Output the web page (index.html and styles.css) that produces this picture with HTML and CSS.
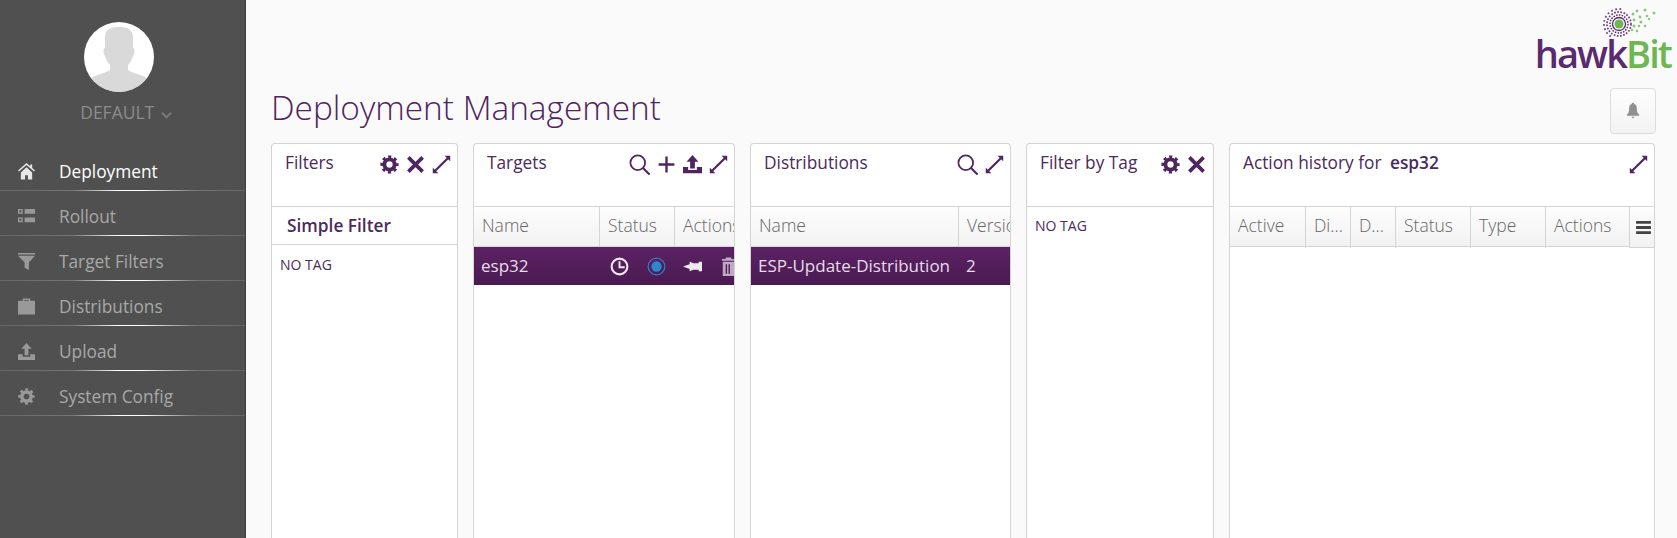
FILE: index.html
```html
<!DOCTYPE html>
<html lang="en">
<head>
  <meta charset="UTF-8" />
  <title>hawkBit - Deployment Management</title>
  <link rel="stylesheet" href="styles.css">
</head>
<body>
  <svg class="defs" width="0" height="0">
    <defs>
      <symbol id="i-gear" viewBox="0 0 24 24">
        <circle cx="12" cy="12" r="6.5" fill="none" stroke="currentColor" stroke-width="5"/>
        <circle cx="12" cy="12" r="9.8" fill="none" stroke="currentColor" stroke-width="3.4" stroke-dasharray="3.9 3.8" stroke-dashoffset="2"/>
      </symbol>
      <symbol id="i-close" viewBox="0 0 24 24">
        <path d="M3 3l18 18M21 3L3 21" fill="none" stroke="currentColor" stroke-width="4.6"/>
      </symbol>
      <symbol id="i-expand" viewBox="0 0 24 24">
        <path d="M4 20L20 4" fill="none" stroke="currentColor" stroke-width="2.8"/>
        <path d="M16 1h7v7zM1 16v7h7z" fill="currentColor"/>
      </symbol>
      <symbol id="i-search" viewBox="0 0 24 24">
        <circle cx="10" cy="10" r="8.400" fill="none" stroke="currentColor" stroke-width="2"/>
        <path d="M16 16L23.500 23.500" fill="none" stroke="currentColor" stroke-width="2.400"/>
      </symbol>
      <symbol id="i-plus" viewBox="0 0 24 24">
        <path d="M12 2v20M2 12h20" fill="none" stroke="currentColor" stroke-width="3"/>
      </symbol>
      <symbol id="i-upload" viewBox="0 0 24 24">
        <path d="M12 0l7.500 8.500H15V17H9V8.500H4.500zM0 15h6.500v4h11v-4H24v8H0z" fill="currentColor"/>
      </symbol>
    </defs>
  </svg>

  <nav class="sidebar">
    <div class="user">
      <svg class="avatar" viewBox="0 0 70 70">
        <defs><clipPath id="avatar-clip"><circle cx="35" cy="35" r="35"/></clipPath></defs>
        <circle cx="35" cy="35" r="35" fill="#fff"/>
        <g clip-path="url(#avatar-clip)" fill="#d9d9d9">
          <path d="M21 15c0-8 7-10 14-10s14 2 14 10v11c2 0 2 6 0 8-1 4-3 7-5 9v5c4 3 16 5 22 10v14H4V58c6-5 18-7 22-10v-5c-2-2-4-5-5-9-2-2-2-8 0-8z"/>
        </g>
      </svg>
      <div class="user-name">DEFAULT
        <svg class="chevron" viewBox="0 0 12 8"><path d="M1 1.500l5 5 5-5" fill="none" stroke="currentColor" stroke-width="2.200"/></svg>
      </div>
    </div>

    <ul class="menu">
      <li class="menu-item active">
        <svg class="menu-icon" viewBox="0 0 18 18"><path d="M9 0L0 8l1 1 8-7 8 7 1-1-3-2.700V1.500h-2v2zM3 10l6-5.500 6 5.500v7.500h-4.500V13h-3v4.500H3z" fill="currentColor"/></svg>
        Deployment
      </li>
      <li class="menu-item">
        <svg class="menu-icon" viewBox="0 0 18 18"><path d="M0 1h5v5H0zm1.500 1.500v2h2v-2zM7 1h11v5H7zM0 10h5v5H0zm1.500 1.500v2h2v-2zM7 10h11v5H7z" fill="currentColor" fill-rule="evenodd"/></svg>
        Rollout
      </li>
      <li class="menu-item">
        <svg class="menu-icon" viewBox="0 0 18 18"><path d="M0 0h18v1.500H0zM0 3h18l-6.500 7v8L7 15.500V10z" fill="currentColor"/></svg>
        Target Filters
      </li>
      <li class="menu-item">
        <svg class="menu-icon" viewBox="0 0 18 18"><path d="M5 3V.5h8V3h5v14.500H0V3zm1.500 0h5V2h-5z" fill="currentColor" fill-rule="evenodd"/></svg>
        Distributions
      </li>
      <li class="menu-item">
        <svg class="menu-icon" viewBox="0 0 18 18"><path d="M9 0l5.500 6H11v7H7V6H3.500zM0 12h5v2.500h8V12h5v6H0z" fill="currentColor"/></svg>
        Upload
      </li>
      <li class="menu-item">
        <svg class="menu-icon"><use href="#i-gear"/></svg>
        System Config
      </li>
    </ul>
  </nav>

  <main class="content">
    <div class="logo">
      <svg class="logo-mark" viewBox="0 0 56 32">
        <circle cx="16" cy="16" r="4.500" fill="#6db650"/>
        <circle cx="16" cy="16" r="6.500" fill="none" stroke="#5a2a6e" stroke-width="1.300"/>
        <circle cx="16" cy="16" r="9" fill="none" stroke="#5a2a6e" stroke-width="1.500" stroke-dasharray="1.500 1.300"/>
        <circle cx="16" cy="16" r="12" fill="none" stroke="#5a2a6e" stroke-width="1.700" stroke-dasharray="1.700 1.500" opacity=".9"/>
        <circle cx="16" cy="16" r="15" fill="none" stroke="#7a4a8e" stroke-width="1.800" stroke-dasharray="1.800 2.500 1.800 2.500 1.800 2.500 1.800 2.500 1.800 2.500 1.800 2.500 1.800 2.500 1.800 2.500 1.800 2.500 1.800 40" stroke-dashoffset="-32"/>
        <g fill="#8cc878">
          <circle cx="30" cy="6" r="1.500"/><circle cx="34" cy="3" r="1.400"/><circle cx="42" cy="2" r="1.500"/>
          <circle cx="37" cy="9" r="1.400"/><circle cx="44" cy="8" r="1.300"/><circle cx="51" cy="5" r="1.500"/>
          <circle cx="31" cy="12" r="1.400"/><circle cx="38" cy="14" r="1.500"/><circle cx="46" cy="11" r="1.200"/>
          <circle cx="31" cy="18" r="1.500"/><circle cx="36" cy="18" r="1.300"/><circle cx="42" cy="18" r="1.300"/>
          <circle cx="29" cy="22" r="1.300"/><circle cx="34" cy="23" r="1.300"/>
        </g>
      </svg>
      <div class="logo-text"><span class="logo-hawk">hawk</span><span class="logo-bit">Bit</span></div>
    </div>

    <div class="title-row">
      <h1>Deployment Management</h1>
      <button class="bell">
        <svg viewBox="0 0 16 18"><path d="M8 0c1 0 1.500.8 1.500 1.600C12 2.500 12.500 5 12.500 8c0 3 1 4.500 2.500 5.500V15H1v-1.500C2.500 12.500 3.500 11 3.500 8c0-3 .5-5.500 3-6.400C6.500.8 7 0 8 0zM6 16h4l-2 2z" fill="currentColor"/></svg>
      </button>
    </div>

    <div class="board">
      <section class="panel panel-filters">
        <header class="panel-head">
          <span class="panel-title">Filters</span>
          <div class="tools">
            <svg class="tool"><use href="#i-gear"/></svg>
            <svg class="tool"><use href="#i-close"/></svg>
            <svg class="tool"><use href="#i-expand"/></svg>
          </div>
        </header>
        <div class="simple-filter">Simple Filter</div>
        <div class="no-tag">NO TAG</div>
      </section>

      <section class="panel panel-targets">
        <header class="panel-head">
          <span class="panel-title">Targets</span>
          <div class="tools">
            <svg class="tool tool-wide"><use href="#i-search"/></svg>
            <svg class="tool"><use href="#i-plus"/></svg>
            <svg class="tool"><use href="#i-upload"/></svg>
            <svg class="tool"><use href="#i-expand"/></svg>
          </div>
        </header>
        <div class="grid-head cols-targets">
          <div class="th">Name</div>
          <div class="th">Status</div>
          <div class="th">Actions</div>
        </div>
        <div class="grid-row cols-targets">
          <div class="td">esp32</div>
          <div class="td td-status">
            <svg class="row-icon" viewBox="0 0 20 20"><circle cx="10" cy="10" r="8.300" fill="none" stroke="currentColor" stroke-width="2.200"/><path d="M10 4.500V10.800H15.500" fill="none" stroke="currentColor" stroke-width="2"/></svg>
            <svg class="row-icon" viewBox="0 0 20 20"><circle cx="10" cy="10" r="8.800" fill="none" stroke="#2f7fc4" stroke-width="1.300"/><circle cx="10" cy="10" r="5.400" fill="#2f86d0"/></svg>
          </div>
          <div class="td td-actions">
            <svg class="row-icon" viewBox="0 0 20 16"><path d="M0 8l7-2.500V3l4 1.500h5.500V3H20v10h-3.500v-1.500H11L7 13v-2.500z" fill="currentColor"/></svg>
            <svg class="row-icon row-icon-dim" viewBox="0 0 16 20"><path d="M5 2V.5h6V2h4v2H1V2zM2 5h12v15H2zm3 2.500v10h1.500v-10zm3 0v10h1.500v-10z" fill="currentColor" fill-rule="evenodd"/></svg>
          </div>
        </div>
      </section>

      <section class="panel panel-dists">
        <header class="panel-head">
          <span class="panel-title">Distributions</span>
          <div class="tools">
            <svg class="tool tool-wide"><use href="#i-search"/></svg>
            <svg class="tool"><use href="#i-expand"/></svg>
          </div>
        </header>
        <div class="grid-head cols-dists">
          <div class="th">Name</div>
          <div class="th">Version</div>
        </div>
        <div class="grid-row cols-dists">
          <div class="td">ESP-Update-Distribution</div>
          <div class="td">2</div>
        </div>
      </section>

      <section class="panel panel-tags">
        <header class="panel-head">
          <span class="panel-title">Filter by Tag</span>
          <div class="tools">
            <svg class="tool"><use href="#i-gear"/></svg>
            <svg class="tool"><use href="#i-close"/></svg>
          </div>
        </header>
        <div class="no-tag no-tag-flat">NO TAG</div>
      </section>

      <section class="panel panel-history">
        <header class="panel-head">
          <span class="panel-title">Action history for <b class="target-name">esp32</b></span>
          <div class="tools">
            <svg class="tool"><use href="#i-expand"/></svg>
          </div>
        </header>
        <div class="grid-head cols-history">
          <div class="th">Active</div>
          <div class="th">Di...</div>
          <div class="th">D...</div>
          <div class="th">Status</div>
          <div class="th">Type</div>
          <div class="th">Actions</div>
          <div class="th th-menu"><svg viewBox="0 0 16 14"><path d="M0 0h16v3H0zM0 5.500h16v3H0zM0 11h16v3H0z" fill="currentColor"/></svg></div>
        </div>
      </section>
    </div>
  </main>
</body>
</html>
```

FILE: styles.css
```css
* {
  box-sizing: border-box;
}

html, body {
  height: 100%;
}

body {
  margin: 0;
  display: flex;
  overflow: hidden;
  background: #fafafa;
  color: #4b2a5c;
  font-family: "Open Sans", sans-serif;
}

.defs {
  position: absolute;
}

/* sidebar */
.sidebar {
  width: 246px;
  flex-shrink: 0;
  background: #505050;
  border-right: 1px solid #3e3e3e;
}

.user {
  height: 146px;
  padding-top: 22px;
  text-align: center;
  color: #8c8c8c;
}

.avatar {
  display: block;
  width: 70px;
  height: 70px;
  margin-left: 84px;
}

.user-name {
  margin-top: 8px;
  padding-left: 7px;
  font-size: 17.500px;
  line-height: 24px;
}

.chevron {
  width: 11px;
  height: 8px;
  margin-left: 2px;
  color: #777;
}

.menu {
  list-style: none;
  margin: 0;
  padding: 0;
}

.menu-item {
  position: relative;
  display: flex;
  align-items: center;
  height: 45px;
  padding: 5px 0 0 18px;
  gap: 24px;
  font-size: 17.300px;
  color: #a8a8a8;
}

.menu-item::after {
  content: "";
  position: absolute;
  left: 0;
  right: 0;
  bottom: 0;
  height: 1px;
  background: linear-gradient(to right, #666, #777 30%, #fff 48%, #fff 58%, #777 80%, #666);
}

.menu-item.active {
  color: #fff;
}

.menu-icon {
  width: 17px;
  height: 17px;
  color: #999;
}

.active .menu-icon {
  color: #e8e8e8;
}

/* main */
.content {
  flex: 1;
  min-width: 0;
  display: flex;
  flex-direction: column;
  padding: 0 22px 0 25px;
}

.logo {
  height: 70px;
  margin-right: -16px;
  display: flex;
  flex-direction: column;
  align-items: flex-end;
}

.logo-mark {
  width: 56px;
  height: 32px;
  margin: 8px 12px 0 0;
  flex-shrink: 0;
}

.logo-text {
  margin-top: -4px;
  font-size: 38px;
  font-weight: 600;
  line-height: 34px;
  letter-spacing: -1.900px;
}

.logo-hawk {
  color: #5a2a6e;
}

.logo-bit {
  color: #6db650;
}

.title-row {
  display: flex;
  align-items: center;
  justify-content: space-between;
  margin-top: 18px;
  height: 45px;
}

h1 {
  margin: -8px 0 0;
  font-size: 33.400px;
  font-weight: 300;
  color: #4f2560;
}

.bell {
  width: 46px;
  height: 46px;
  margin-right: -1px;
  padding: 0;
  display: flex;
  align-items: center;
  justify-content: center;
  background: linear-gradient(#fdfdfd, #f3f3f3);
  border: 1px solid #ddd;
  border-radius: 4px;
  color: #909090;
}

.bell svg {
  width: 14px;
  height: 17px;
}

.board {
  flex: 1;
  display: flex;
  gap: 15px;
  margin-top: 10px;
}

.panel {
  background: #fff;
  border: 1px solid #d4d4d4;
  border-bottom: none;
  border-radius: 4px 4px 0 0;
  overflow: hidden;
}

.panel-filters {
  width: 187px;
}

.panel-targets {
  width: 262px;
}

.panel-dists {
  width: 261px;
}

.panel-tags {
  width: 188px;
}

.panel-history {
  width: 426px;
}

.panel-head {
  display: flex;
  justify-content: space-between;
  height: 63px;
  padding: 7px 6px 0 13px;
  border-bottom: 1px solid #d4d4d4;
  font-size: 17.300px;
  line-height: 24px;
}

.target-name {
  margin-left: 4px;
  font-weight: 600;
}

.tools {
  display: flex;
  gap: 7px;
  padding-top: 4px;
  color: #4f2560;
}

.panel-tags .tools {
  margin-right: 1px;
}

.tool {
  width: 19px;
  height: 19px;
}

.tool-wide {
  width: 21px;
  height: 21px;
  margin-top: -1px;
}

.simple-filter {
  height: 38px;
  padding-left: 15px;
  font-size: 17.300px;
  font-weight: 600;
  line-height: 37px;
  border-bottom: 1px solid #d4d4d4;
}

.no-tag {
  padding: 11px 8px;
  font-size: 14px;
  line-height: 18px;
}

.no-tag-flat {
  padding-top: 10px;
}

/* grids */
.grid-head,
.grid-row {
  display: grid;
}

.cols-targets {
  grid-template-columns: 126px 75px 80px;
}

.cols-dists {
  grid-template-columns: 208px 80px;
}

.cols-history {
  grid-template-columns: 76px 45px 45px 75px 75px 84px 26px;
}

.grid-head {
  height: 40px;
  background: linear-gradient(#fdfdfd, #f2f2f2);
  border-bottom: 1px solid #d4d4d4;
}

.th {
  padding-left: 8px;
  border-right: 1px solid #d4d4d4;
  font-size: 17.500px;
  font-weight: 300;
  line-height: 37px;
  color: #666;
  white-space: nowrap;
  overflow: hidden;
}

.th-menu {
  display: flex;
  align-items: center;
  justify-content: center;
  height: 41px;
  padding: 0;
  border-right: none;
  border-bottom: 1px solid #d4d4d4;
  background: linear-gradient(#fdfdfd, #f2f2f2);
  color: #444;
}

.th-menu svg {
  width: 15px;
  height: 13px;
}

.grid-row {
  height: 38px;
  background: linear-gradient(#5b2263, #4a1a52);
  color: #e8dcea;
}

.td {
  padding-left: 7px;
  font-size: 17px;
  line-height: 37px;
  white-space: nowrap;
  overflow: hidden;
}

.td-status,
.td-actions {
  display: flex;
  align-items: center;
  padding-left: 0;
}

.td-status {
  gap: 18px;
  padding-left: 10px;
}

.td-actions {
  gap: 17px;
  padding-left: 8px;
}

.row-icon {
  width: 19px;
  height: 19px;
  flex-shrink: 0;
  color: #f2eaf3;
}

.row-icon-dim {
  color: #bfa9c4;
}
```
